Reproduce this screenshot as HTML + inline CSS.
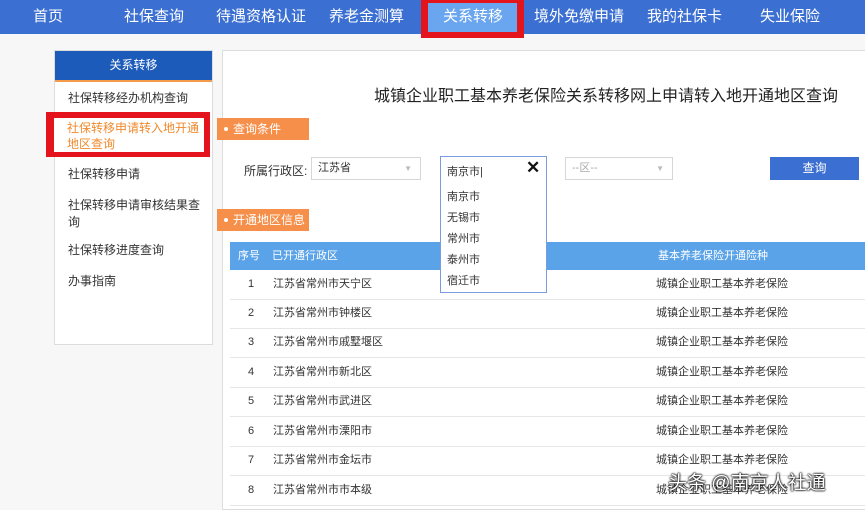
<!DOCTYPE html><html><head><meta charset="utf-8"><style>
body{margin:0;width:865px;height:507px;overflow:hidden;background:#f7f7f7;font-family:"Liberation Sans","Noto Sans CJK SC",sans-serif;position:relative}
.a{position:absolute}
.nav{left:0;top:0;width:865px;height:34px;background:#3b6fd2}
.nav span{position:absolute;top:0;line-height:34px;color:#fff;font-size:15px}
.side{left:54px;top:50px;width:159px;height:295px;background:#fff;border:1px solid #dcdcdc;box-sizing:border-box}
.side div{position:absolute;left:13px;font-size:12px;color:#333;line-height:17px}
.main{left:222px;top:50px;width:650px;height:460px;background:#fff;border:1px solid #dcdcdc;box-sizing:border-box}
.tag{background:#f68f4a;color:#fff;font-size:12px;height:22px;line-height:22px;padding-left:16px}
.sel{height:23px;border:1px solid #d6d6d6;background:#fff;box-sizing:border-box;font-size:11px;line-height:21px;padding-left:6px;color:#333}
.tr{left:230px;width:640px;height:29px;border-bottom:1px solid #e6e6e6;font-size:11px;color:#333;line-height:29px}
.tr span{position:absolute}
</style></head><body>
<div class="a nav">
<span style="left:33px">首页</span><span style="left:124px">社保查询</span><span style="left:216px">待遇资格认证</span><span style="left:329px">养老金测算</span>
<div class="a" style="left:421px;top:0;width:103px;height:38px;background:#e3141c"></div>
<div class="a" style="left:428px;top:3px;width:89px;height:29px;background:#6aa5ef"></div>
<span style="left:443px">关系转移</span><span style="left:534px">境外免缴申请</span><span style="left:647px">我的社保卡</span><span style="left:760px">失业保险</span>
</div>
<div class="a side">
<div style="left:0;top:0;width:157px;height:29px;background:#1d5bbb;color:#fff;text-align:center;line-height:29px;border-bottom:2px solid #f39a4b">关系转移</div>
<div style="top:39px">社保转移经办机构查询</div>
<div style="top:115px">社保转移申请</div>
<div style="top:146px">社保转移申请审核结果查<br>询</div>
<div style="top:191px">社保转移进度查询</div>
<div style="top:222px">办事指南</div>
</div>
<div class="a" style="left:46px;top:112px;width:164px;height:45px;background:#e3141c"></div>
<div class="a" style="left:54px;top:118px;width:150px;height:34px;background:#fff"></div>
<div class="a" style="left:67px;top:120px;font-size:12px;color:#f08a2e;line-height:16px">社保转移申请转入地开通<br>地区查询</div>
<div class="a main"></div>
<div class="a" style="left:374px;top:82px;font-size:16px;color:#222">城镇企业职工基本养老保险关系转移网上申请转入地开通地区查询</div>
<div class="a tag" style="left:217px;top:118px;width:76px">查询条件</div>
<div class="a" style="left:224px;top:127px;width:4px;height:4px;background:#fff;border-radius:2px"></div>
<div class="a" style="left:244px;top:162px;font-size:12px;color:#333">所属行政区:</div>
<div class="a sel" style="left:311px;top:157px;width:110px">江苏省<span style="position:absolute;right:8px;color:#bbb;font-size:8px">▼</span></div>
<div class="a sel" style="left:565px;top:157px;width:108px;color:#aaa">--区--<span style="position:absolute;right:8px;color:#bbb;font-size:8px">▼</span></div>
<div class="a" style="left:770px;top:157px;width:89px;height:23px;background:#3b6fd2;color:#fff;font-size:12px;text-align:center;line-height:23px">查询</div>
<div class="a tag" style="left:217px;top:209px;width:76px">开通地区信息</div>
<div class="a" style="left:224px;top:218px;width:4px;height:4px;background:#fff;border-radius:2px"></div>
<div class="a" style="left:230px;top:242px;width:640px;height:28px;background:#5aa3e8;color:#fff;font-size:11px;line-height:28px">
<span class="a" style="left:8px">序号</span><span class="a" style="left:42px">已开通行政区</span><span class="a" style="left:428px">基本养老保险开通险种</span></div>
<div class="a tr" style="top:270px"><span style="left:18px">1</span><span style="left:43px">江苏省常州市天宁区</span><span style="left:426px">城镇企业职工基本养老保险</span></div>
<div class="a tr" style="top:299px"><span style="left:18px">2</span><span style="left:43px">江苏省常州市钟楼区</span><span style="left:426px">城镇企业职工基本养老保险</span></div>
<div class="a tr" style="top:328px"><span style="left:18px">3</span><span style="left:43px">江苏省常州市戚墅堰区</span><span style="left:426px">城镇企业职工基本养老保险</span></div>
<div class="a tr" style="top:358px"><span style="left:18px">4</span><span style="left:43px">江苏省常州市新北区</span><span style="left:426px">城镇企业职工基本养老保险</span></div>
<div class="a tr" style="top:387px"><span style="left:18px">5</span><span style="left:43px">江苏省常州市武进区</span><span style="left:426px">城镇企业职工基本养老保险</span></div>
<div class="a tr" style="top:417px"><span style="left:18px">6</span><span style="left:43px">江苏省常州市溧阳市</span><span style="left:426px">城镇企业职工基本养老保险</span></div>
<div class="a tr" style="top:446px"><span style="left:18px">7</span><span style="left:43px">江苏省常州市金坛市</span><span style="left:426px">城镇企业职工基本养老保险</span></div>
<div class="a tr" style="top:476px"><span style="left:18px">8</span><span style="left:43px">江苏省常州市市本级</span><span style="left:426px">城镇企业职工基本养老保险</span></div>
<div class="a" style="left:440px;top:156px;width:107px;height:137px;background:#fff;border:1px solid #7a9be0;box-sizing:border-box;font-size:11px;color:#333">
<div class="a" style="left:6px;top:6px">南京市|</div>
<div class="a" style="left:85px;top:1px;font-size:17px;font-weight:bold;color:#111">✕</div>
<div class="a" style="left:6px;top:31px">南京市</div>
<div class="a" style="left:6px;top:52px">无锡市</div>
<div class="a" style="left:6px;top:73px">常州市</div>
<div class="a" style="left:6px;top:94px">泰州市</div>
<div class="a" style="left:6px;top:115px">宿迁市</div>
</div>
<div class="a" style="left:668px;top:468px;font-size:19px;color:#fff;text-shadow:0 0 2px #000,0 0 2px #000,0 0 1px #000">头条 @南京人社通</div>
</body></html>
